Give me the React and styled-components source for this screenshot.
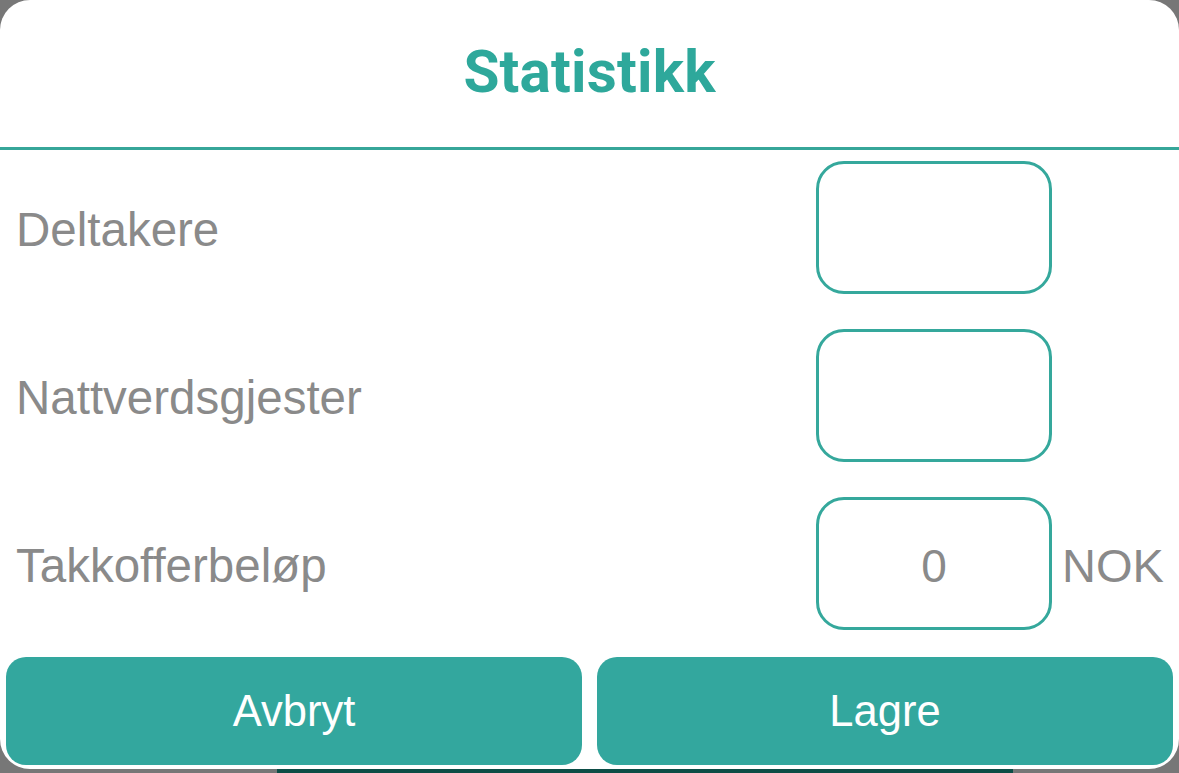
import React from "react";
import styled, { createGlobalStyle } from "styled-components";

const Global = createGlobalStyle`
  html, body { margin: 0; padding: 0; background: #777777; }
  body { width: 1179px; height: 773px; overflow: hidden; }
  * { box-sizing: border-box; }
`;

const Screen = styled.div`
  width: 1179px;
  height: 773px;
  display: flex;
  flex-direction: column;
  background: #777777;
`;

const Modal = styled.div`
  width: 1179px;
  height: 769px;
  background: #ffffff;
  border-radius: 30px;
  display: flex;
  flex-direction: column;
  overflow: hidden;
`;

const Header = styled.div`
  height: 150px;
  flex: none;
  border-bottom: 3px solid #36a699;
  display: flex;
  align-items: center;
  justify-content: center;
  padding-bottom: 4px;
`;

const Title = styled.h1`
  margin: 0;
  font-family: Roboto, "Noto Sans", sans-serif;
  font-weight: 700;
  font-size: 58.5px;
  color: #2ea89b;
  letter-spacing: 0.2px;
`;

const Body = styled.div`
  display: flex;
  flex-direction: column;
  gap: 35px;
  padding-top: 11px;
`;

const Row = styled.div`
  display: flex;
  align-items: center;
  height: 133px;
`;

const Label = styled.div`
  flex: 1;
  padding-left: 16px;
  padding-top: 4px;
  font-family: "Liberation Sans", Arial, sans-serif;
  font-size: 47.5px;
  color: #8a8a8a;
`;

const Field = styled.div`
  width: 236px;
  height: 133px;
  border: 3px solid #35a89c;
  border-radius: 28px;
  display: flex;
  align-items: center;
  justify-content: center;
  padding-top: 4px;
  font-family: "Liberation Sans", Arial, sans-serif;
  font-size: 46px;
  color: #8a8a8a;
`;

const Suffix = styled.div`
  width: 127px;
  padding-left: 10px;
  padding-top: 4px;
  font-family: "Liberation Sans", Arial, sans-serif;
  font-size: 47px;
  color: #8a8a8a;
`;

const Actions = styled.div`
  display: flex;
  gap: 15px;
  padding: 0 6px;
  margin-top: 27px;
`;

const Button = styled.button`
  flex: 1;
  height: 108px;
  border: none;
  border-radius: 20px;
  background: #33a79e;
  color: #ffffff;
  font-family: "Liberation Sans", Arial, sans-serif;
  font-size: 43.5px;
  padding: 0;
  cursor: pointer;
`;

const Behind = styled.div`
  height: 4px;
  display: flex;
`;

const Spacer = styled.div`
  width: ${(p) => p.$w}px;
`;

const TabStrip = styled.div`
  width: 736px;
  background: #0c4d46;
`;

const rows = [
  { label: "Deltakere", value: "" },
  { label: "Nattverdsgjester", value: "" },
  { label: "Takkofferbeløp", value: "0", suffix: "NOK" },
];

export default function App() {
  return (
    <>
      <Global />
      <Screen>
        <Modal>
          <Header>
            <Title>Statistikk</Title>
          </Header>
          <Body>
            {rows.map((r) => (
              <Row key={r.label}>
                <Label>{r.label}</Label>
                <Field>{r.value}</Field>
                <Suffix>{r.suffix}</Suffix>
              </Row>
            ))}
          </Body>
          <Actions>
            <Button>Avbryt</Button>
            <Button>Lagre</Button>
          </Actions>
        </Modal>
        <Behind>
          <Spacer $w={277} />
          <TabStrip />
        </Behind>
      </Screen>
    </>
  );
}
